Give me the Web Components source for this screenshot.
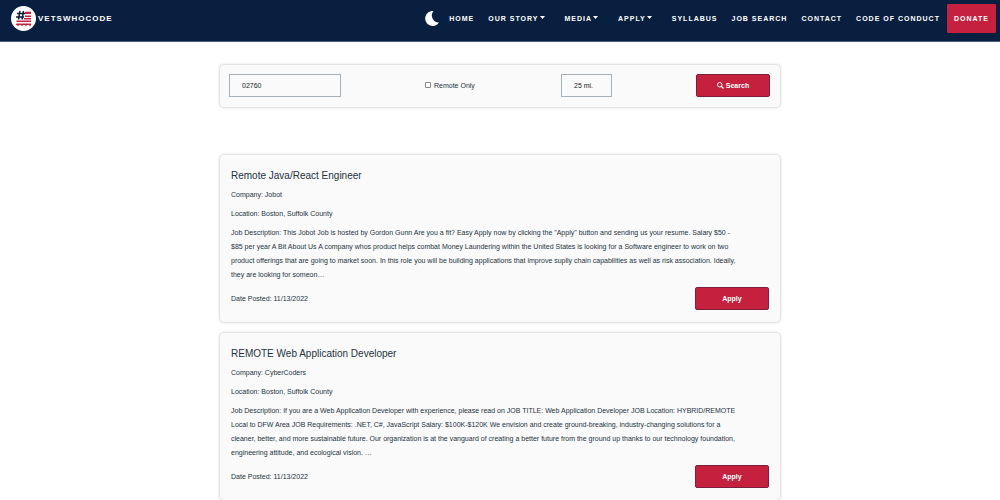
<!DOCTYPE html>
<html lang="en">
<head>
<meta charset="utf-8">
<meta name="viewport" content="width=device-width, initial-scale=1">
<title>Job Search | VetsWhoCode</title>
<style>
  :root {
    --navy: #091f40;
    --red: #c5203e;
    --ink: #24323f;
    --panel: #fafafa;
  }
  body {
    margin: 0;
    background: #fff;
    color: var(--ink);
    font: 7px/14px "Liberation Sans", Arial, sans-serif;
  }
  main {
    box-sizing: border-box;
    max-width: 576px;
    margin: 0 auto;
    padding: 23px 8px 0;
  }
  .jobs {
    display: flex;
    flex-direction: column;
    gap: 11px;
    margin-top: 48px;
  }
</style>
</head>
<body>
<site-header></site-header>
<main>
  <job-filter></job-filter>
  <div class="jobs">
    <job-card>
      <span slot="title">Remote Java/React Engineer</span>
      <span slot="company">Company: Jobot</span>
      <span slot="location">Location: Boston, Suffolk County</span>
      <span slot="description">Job Description: This Jobot Job is hosted by Gordon Gunn Are you a fit? Easy Apply now by clicking the "Apply" button and sending us your resume. Salary $50 - $85 per year A Bit About Us A company whos product helps combat Money Laundering within the United States is looking for a Software engineer to work on two product offerings that are going to market soon. In this role you will be building applications that improve suplly chain capabilities as well as risk association. Ideally, they are looking for someon…</span>
      <span slot="date">Date Posted: 11/13/2022</span>
    </job-card>
    <job-card>
      <span slot="title">REMOTE Web Application Developer</span>
      <span slot="company">Company: CyberCoders</span>
      <span slot="location">Location: Boston, Suffolk County</span>
      <span slot="description">Job Description: If you are a Web Application Developer with experience, please read on JOB TITLE: Web Application Developer JOB Location: HYBRID/REMOTE Local to DFW Area JOB Requirements: .NET, C#, JavaScript Salary: $100K-$120K We envision and create ground-breaking, industry-changing solutions for a cleaner, better, and more sustainable future. Our organization is at the vanguard of creating a better future from the ground up thanks to our technology foundation, engineering attitude, and ecological vision. …</span>
      <span slot="date">Date Posted: 11/13/2022</span>
    </job-card>
  </div>
</main>

<script>
const define = (name, html) => {
  const template = document.createElement('template');
  template.innerHTML = html;
  customElements.define(name, class extends HTMLElement {
    constructor() {
      super();
      this.attachShadow({ mode: 'open' }).append(template.content.cloneNode(true));
    }
  });
};

define('nav-item', `
  <style>
    :host { display: block; }
    a {
      display: flex;
      align-items: center;
      gap: 1px;
      padding: 0 7px;
      color: #fff;
      font-weight: 700;
      letter-spacing: 1px;
      line-height: 29px;
      text-decoration: none;
      white-space: nowrap;
    }
    svg { display: none; width: 5px; height: 3px; margin-bottom: 2px; }
    :host([menu]) { margin-right: 6px; }
    :host([menu]) svg { display: block; }
    :host([primary]) a { background: var(--red); border-radius: 1px; }
  </style>
  <a href="#"><slot></slot><svg viewBox="0 0 10 6" aria-hidden="true"><path d="M0 0h10L5 6z" fill="#fff"/></svg></a>
`);

define('site-header', `
  <style>
    :host { display: block; background: var(--navy); border-bottom: 1px solid #4a5c75; color: #fff; }
    header { display: flex; align-items: center; justify-content: space-between; padding: 4px 4px 8px 11px; }
    .brand { display: flex; align-items: center; gap: 2px; color: #fff; font-size: 8px; font-weight: 700; letter-spacing: 1px; text-decoration: none; }
    .brand svg { width: 25px; height: 25px; }
    nav { display: flex; align-items: center; }
    button { display: block; margin: 0 2px 0 0; padding: 0; border: 0; background: none; line-height: 0; }
    button svg { width: 16px; height: 16px; }
  </style>
  <header>
    <a class="brand" href="#">
      <svg viewBox="0 0 50 50" aria-hidden="true">
        <circle cx="25" cy="25" r="25" fill="#fff"/>
        <path d="M28 12l2-1 2 1 2-1 2 1 2-1 2 1v4H28zM28 19h12v3H28zM26 24h14v3H26zM11 29h29v3H11zM11 35h29v3l-2 3-2-3h-4l-2 3-2-3h-4l-2 3-2-3h-4l-2 3-2-3h-3z" fill="#c5203e"/>
        <path d="M18 10l-3 17M25 10l-3 17M12 15h16M10 22h16" stroke="#091f40" stroke-width="3" fill="none"/>
      </svg>
      <span>VETSWHOCODE</span>
    </a>
    <nav aria-label="Main">
      <button type="button" aria-label="Toggle dark mode"><svg viewBox="0 0 16 16"><path d="M9.500 0A7.500 7.500 0 1 0 15 11.500A7 7 0 0 1 9.500 0z" fill="#fff"/></svg></button>
      <nav-item>HOME</nav-item>
      <nav-item menu>OUR STORY</nav-item>
      <nav-item menu>MEDIA</nav-item>
      <nav-item menu>APPLY</nav-item>
      <nav-item>SYLLABUS</nav-item>
      <nav-item>JOB SEARCH</nav-item>
      <nav-item>CONTACT</nav-item>
      <nav-item>CODE OF CONDUCT</nav-item>
      <nav-item primary>DONATE</nav-item>
    </nav>
  </header>
`);

define('surface-panel', `
  <style>
    :host { display: block; background: var(--panel); border-radius: 4px; box-shadow: 0 0 3px rgba(0, 0, 0, .3); }
  </style>
  <slot></slot>
`);

define('action-button', `
  <style>
    :host { display: block; }
    button {
      display: flex;
      align-items: center;
      justify-content: center;
      gap: 2px;
      box-sizing: border-box;
      width: 74px;
      height: 23px;
      padding: 0;
      border: 1px solid #7a1f3c;
      border-radius: 2px;
      background: var(--red);
      color: #fff;
      font: inherit;
      font-weight: 700;
    }
  </style>
  <button type="button"><slot name="icon"></slot><slot></slot></button>
`);

define('job-filter', `
  <style>
    :host { display: block; }
    form { display: flex; align-items: center; justify-content: space-between; padding: 9px 10px 10px 9px; }
    input[type=text], select {
      box-sizing: border-box;
      height: 23px;
      margin: 0;
      padding: 0 12px;
      border: 1px solid #a5b0b8;
      border-radius: 0;
      background: var(--panel);
      color: #222;
      font: inherit;
      appearance: none;
    }
    input[type=text] { width: 112px; }
    select { width: 51px; }
    label { display: flex; align-items: center; gap: 3px; min-width: 52px; }
    input[type=checkbox] {
      box-sizing: border-box;
      width: 6px;
      height: 6px;
      margin: 0 0 1px;
      border: 1px solid #858585;
      border-radius: 1px;
      background: #fff;
      appearance: none;
    }
    input[type=checkbox]:checked { background: var(--red); }
    svg { display: block; width: 7px; height: 7px; }
  </style>
  <surface-panel>
    <form>
      <input type="text" value="02760" aria-label="Zip code">
      <label><input type="checkbox">Remote Only</label>
      <select aria-label="Distance"><option>25 mi.</option></select>
      <action-button><svg slot="icon" viewBox="0 0 14 14" aria-hidden="true"><circle cx="5.500" cy="5.500" r="4.500" fill="none" stroke="#fff" stroke-width="2"/><path d="M9 9l4 4" stroke="#fff" stroke-width="2.500"/></svg>Search</action-button>
    </form>
  </surface-panel>
`);

define('job-card', `
  <style>
    :host { display: block; }
    article { display: flex; flex-direction: column; gap: 5px; padding: 14px 11px 12px; }
    h2, p { margin: 0; font-weight: 400; }
    h2 { font-size: 10px; line-height: 14px; }
    .description { padding-right: 26px; }
    footer { display: flex; align-items: center; justify-content: space-between; }
  </style>
  <surface-panel>
    <article>
      <h2><slot name="title"></slot></h2>
      <p><slot name="company"></slot></p>
      <p><slot name="location"></slot></p>
      <p class="description"><slot name="description"></slot></p>
      <footer>
        <p><slot name="date"></slot></p>
        <action-button>Apply</action-button>
      </footer>
    </article>
  </surface-panel>
`);
</script>
</body>
</html>
